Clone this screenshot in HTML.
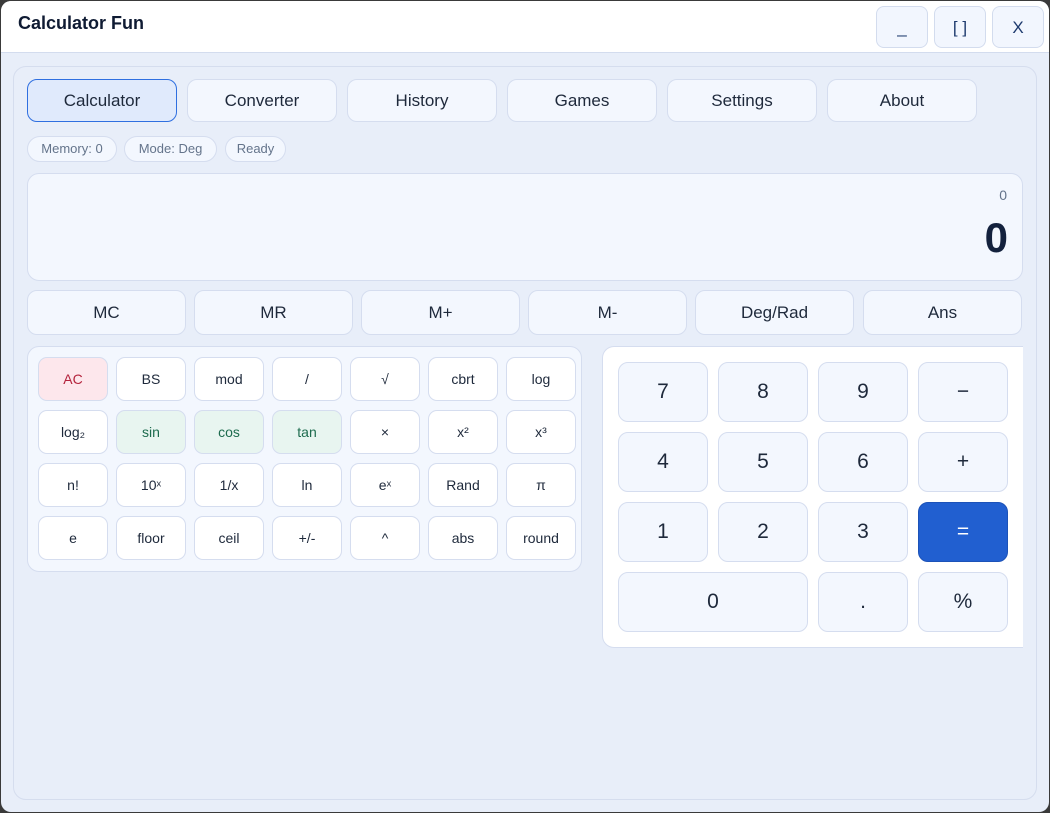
<!DOCTYPE html>
<html><head><meta charset="utf-8"><style>
*{box-sizing:border-box;margin:0;padding:0}
body{width:1050px;height:813px;background:#3a3a3a;font-family:"Liberation Sans",sans-serif;color:#1e293b;overflow:hidden;position:relative}
.win{position:absolute;left:1px;top:1px;width:1048px;height:811px;background:#e8eef9;border-radius:10px;overflow:hidden}
.title{position:absolute;left:0;top:0;width:1048px;height:52px;background:#fff;border-bottom:1px solid #d3dcee}
.title h1{position:absolute;left:17px;top:12px;font-size:18px;font-weight:bold;color:#0f1b33}
.wb{position:absolute;top:5px;width:52px;height:42px;background:#f2f6fe;border:1px solid #d3dcee;border-radius:8px;font-size:17px;color:#1e3a6e;text-align:center;line-height:42px}
.cont{position:absolute;left:12px;top:65px;width:1024px;height:734px;border:1px solid #d5ddee;border-radius:13px}
.b{position:absolute;display:flex;align-items:center;justify-content:center;border:1px solid #d5ddef;border-radius:10px;background:#f3f7fe;color:#1e293b}
.tab{top:79px;width:150px;height:43px;font-size:17px}
.chip{position:absolute;top:136px;height:26px;border:1px solid #d5ddef;border-radius:13px;background:#f3f7fe;color:#64748b;font-size:13px;line-height:24px;text-align:center}
.mem{top:290px;width:159px;height:45px;font-size:17px;font-weight:500}
.s{width:70px;height:44px;background:#fff;font-size:14px;border-radius:9px}
.k{width:90px;height:60px;font-size:21px;border-radius:10px}
</style></head><body>
<div class="win">
<div class="title"><h1>Calculator Fun</h1>
<div class="wb" style="left:875px">_</div><div class="wb" style="left:933px">[ ]</div><div class="wb" style="left:991px">X</div></div>
<div class="cont"></div>
</div>
<div class="b tab" style="left:27px;background:#e0eafc;border-color:#2f6fe0">Calculator</div>
<div class="b tab" style="left:187px">Converter</div>
<div class="b tab" style="left:347px">History</div>
<div class="b tab" style="left:507px">Games</div>
<div class="b tab" style="left:667px">Settings</div>
<div class="b tab" style="left:827px">About</div>
<div class="chip" style="left:27px;width:90px">Memory: 0</div>
<div class="chip" style="left:124px;width:93px">Mode: Deg</div>
<div class="chip" style="left:225px;width:61px">Ready</div>
<div style="position:absolute;left:27px;top:173px;width:996px;height:108px;background:#f3f7fe;border:1px solid #d5ddef;border-radius:12px">
<div style="position:absolute;right:15px;top:13px;font-size:14px;color:#64748b">0</div>
<div style="position:absolute;right:14px;top:40px;font-size:42px;font-weight:bold;color:#13213d">0</div></div>
<div class="b mem" style="left:27px">MC</div>
<div class="b mem" style="left:194px">MR</div>
<div class="b mem" style="left:361px">M+</div>
<div class="b mem" style="left:528px">M-</div>
<div class="b mem" style="left:695px">Deg/Rad</div>
<div class="b mem" style="left:863px">Ans</div>
<div style="position:absolute;left:27px;top:346px;width:555px;height:226px;background:#f3f7fe;border:1px solid #d5ddef;border-radius:12px"></div>
<div class="b s" style="left:38px;top:357px;background:#fde7ec;color:#b4233c">AC</div>
<div class="b s" style="left:116px;top:357px">BS</div>
<div class="b s" style="left:194px;top:357px">mod</div>
<div class="b s" style="left:272px;top:357px">/</div>
<div class="b s" style="left:350px;top:357px">√</div>
<div class="b s" style="left:428px;top:357px">cbrt</div>
<div class="b s" style="left:506px;top:357px">log</div>
<div class="b s" style="left:38px;top:410px">log₂</div>
<div class="b s" style="left:116px;top:410px;background:#e8f5f0;color:#1d6b4e">sin</div>
<div class="b s" style="left:194px;top:410px;background:#e8f5f0;color:#1d6b4e">cos</div>
<div class="b s" style="left:272px;top:410px;background:#e8f5f0;color:#1d6b4e">tan</div>
<div class="b s" style="left:350px;top:410px">×</div>
<div class="b s" style="left:428px;top:410px">x²</div>
<div class="b s" style="left:506px;top:410px">x³</div>
<div class="b s" style="left:38px;top:463px">n!</div>
<div class="b s" style="left:116px;top:463px">10ˣ</div>
<div class="b s" style="left:194px;top:463px">1/x</div>
<div class="b s" style="left:272px;top:463px">ln</div>
<div class="b s" style="left:350px;top:463px">eˣ</div>
<div class="b s" style="left:428px;top:463px">Rand</div>
<div class="b s" style="left:506px;top:463px">π</div>
<div class="b s" style="left:38px;top:516px">e</div>
<div class="b s" style="left:116px;top:516px">floor</div>
<div class="b s" style="left:194px;top:516px">ceil</div>
<div class="b s" style="left:272px;top:516px">+/-</div>
<div class="b s" style="left:350px;top:516px">^</div>
<div class="b s" style="left:428px;top:516px">abs</div>
<div class="b s" style="left:506px;top:516px">round</div>
<div style="position:absolute;left:602px;top:346px;width:421px;height:302px;background:#fff;border:1px solid #d5ddef;border-right:none;border-radius:12px 0 0 12px"></div>
<div class="b k" style="left:618px;top:362px">7</div>
<div class="b k" style="left:718px;top:362px">8</div>
<div class="b k" style="left:818px;top:362px">9</div>
<div class="b k" style="left:918px;top:362px">−</div>
<div class="b k" style="left:618px;top:432px">4</div>
<div class="b k" style="left:718px;top:432px">5</div>
<div class="b k" style="left:818px;top:432px">6</div>
<div class="b k" style="left:918px;top:432px">+</div>
<div class="b k" style="left:618px;top:502px">1</div>
<div class="b k" style="left:718px;top:502px">2</div>
<div class="b k" style="left:818px;top:502px">3</div>
<div class="b k" style="left:918px;top:502px;background:#215fd0;border-color:#1c52b8;color:#fff">=</div>
<div class="b k" style="left:618px;top:572px;width:190px">0</div>
<div class="b k" style="left:818px;top:572px">.</div>
<div class="b k" style="left:918px;top:572px">%</div>
</body></html>
